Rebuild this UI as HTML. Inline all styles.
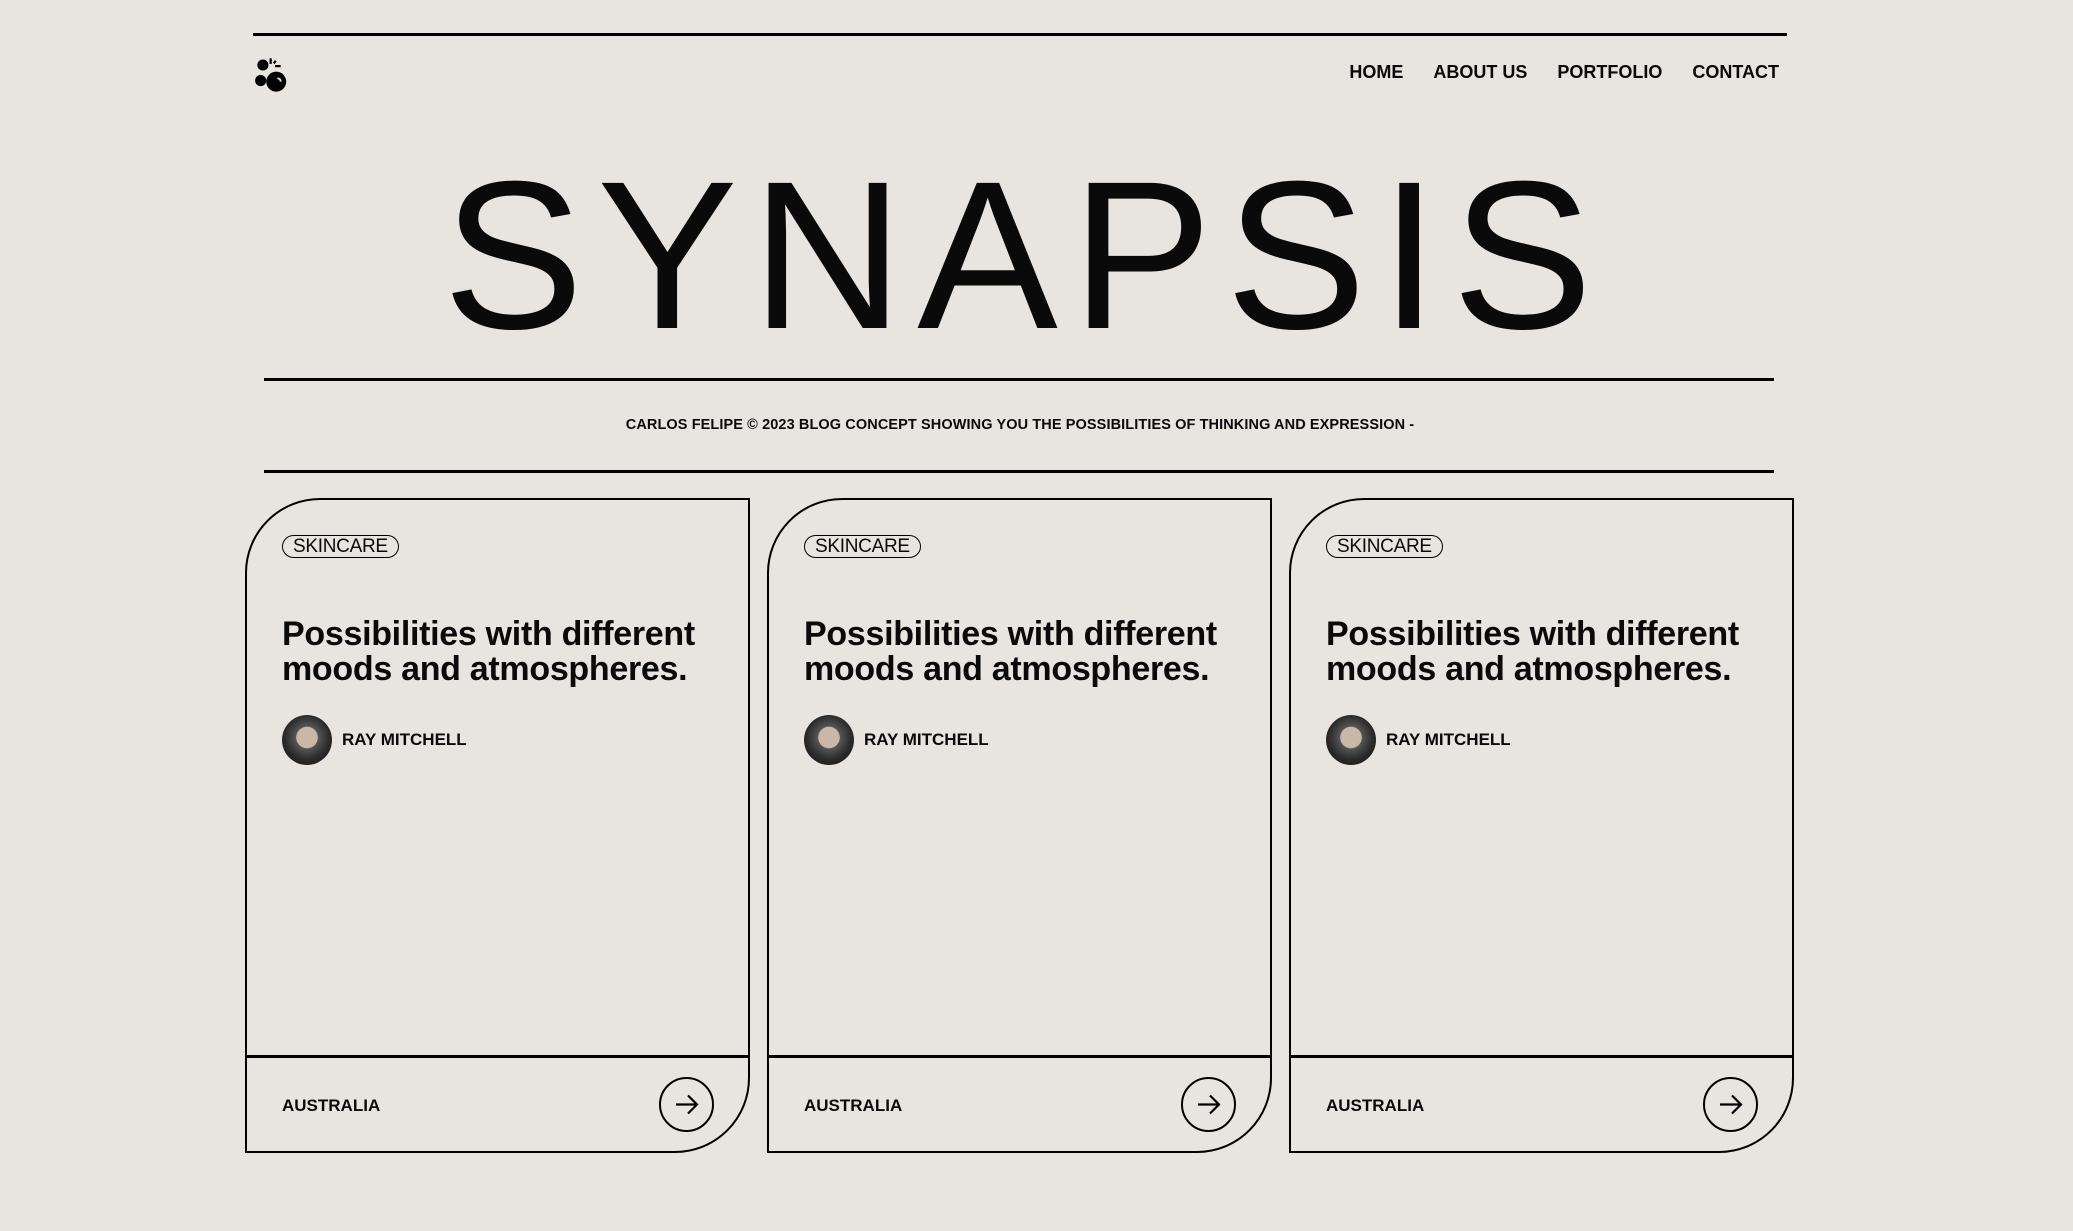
<!DOCTYPE html>
<html><head><meta charset="utf-8"><style>
*{margin:0;padding:0;box-sizing:border-box}
body{width:2073px;height:1231px;background:#e8e4df;font-family:"Liberation Sans",sans-serif;color:#0a0a0a;position:relative;overflow:hidden}
.abs{position:absolute}
.line{position:absolute;background:#000}
nav{position:absolute;right:294px;top:62px;display:flex;gap:30px;font-weight:bold;font-size:18px}
h1{position:absolute;left:-12px;width:2073px;text-align:center;top:150px;font-size:211px;font-weight:normal;letter-spacing:13.5px;line-height:1;}
.sub{position:absolute;top:417px;left:0;width:2040px;text-align:center;font-size:14.5px;font-weight:bold;letter-spacing:0.1px}
.card{position:absolute;top:498px;width:505px;height:655px;border:2.5px solid #000;border-radius:75px 0 75px 0}
.pill{position:absolute;left:35px;top:35px;border:1.5px solid #000;border-radius:12px;font-size:19px;padding:0 10px;height:23px;line-height:21px;letter-spacing:-0.3px}
.title{position:absolute;left:35px;top:117px;font-size:34px;font-weight:bold;line-height:35px;letter-spacing:-0.3px;white-space:nowrap}
.av{position:absolute;left:35px;top:215px;width:50px;height:50px;border-radius:50%;background:radial-gradient(circle at 50% 45%,#c9b8a8 0 28%,#555 30%,#2a2a2a 60%,#111 100%)}
.name{position:absolute;left:95px;top:230px;font-size:17px;font-weight:bold}
.div{position:absolute;left:0;right:0;top:555px;height:2.5px;background:#000}
.loc{position:absolute;left:35px;top:596px;font-size:17px;font-weight:bold}
.arr{position:absolute;left:412px;top:577px;width:55px;height:55px;border:2px solid #000;border-radius:50%}
</style></head><body>
<div class="line" style="left:253px;top:33px;width:1534px;height:3px"></div>
<svg class="abs" style="left:254px;top:56px" width="40" height="38" viewBox="0 0 36 34">
<circle cx="8" cy="8" r="5" fill="#000"/><circle cx="6" cy="22" r="5" fill="#000"/><circle cx="20" cy="23" r="9" fill="#000"/>
<path d="M21 20 q3 0 3 3" stroke="#e8e4df" stroke-width="1.6" fill="none"/>
<rect x="14" y="2" width="2" height="5" fill="#000"/><rect x="19" y="8" width="5" height="2" fill="#000"/><rect x="18" y="4" width="2" height="3" fill="#000" transform="rotate(40 19 5)"/>
</svg>
<nav><span>HOME</span><span>ABOUT US</span><span>PORTFOLIO</span><span>CONTACT</span></nav>
<h1>SYNAPSIS</h1>
<div class="line" style="left:264px;top:378px;width:1510px;height:2.5px"></div>
<div class="sub">CARLOS FELIPE © 2023 BLOG CONCEPT SHOWING YOU THE POSSIBILITIES OF THINKING AND EXPRESSION -</div>
<div class="line" style="left:264px;top:470px;width:1510px;height:2.5px"></div>

<div class="card" style="left:245px">
<div class="pill">SKINCARE</div>
<div class="title">Possibilities with different<br>moods and atmospheres.</div>
<div class="av"></div><div class="name">RAY MITCHELL</div>
<div class="div"></div><div class="loc">AUSTRALIA</div>
<div class="arr"><svg width="51" height="51" viewBox="0 0 51 51"><path d="M15 25.5h21M27 16.5l9 9-9 9" stroke="#000" stroke-width="2.2" fill="none"/></svg></div>
</div>
<div class="card" style="left:767px">
<div class="pill">SKINCARE</div>
<div class="title">Possibilities with different<br>moods and atmospheres.</div>
<div class="av"></div><div class="name">RAY MITCHELL</div>
<div class="div"></div><div class="loc">AUSTRALIA</div>
<div class="arr"><svg width="51" height="51" viewBox="0 0 51 51"><path d="M15 25.5h21M27 16.5l9 9-9 9" stroke="#000" stroke-width="2.2" fill="none"/></svg></div>
</div>
<div class="card" style="left:1289px">
<div class="pill">SKINCARE</div>
<div class="title">Possibilities with different<br>moods and atmospheres.</div>
<div class="av"></div><div class="name">RAY MITCHELL</div>
<div class="div"></div><div class="loc">AUSTRALIA</div>
<div class="arr"><svg width="51" height="51" viewBox="0 0 51 51"><path d="M15 25.5h21M27 16.5l9 9-9 9" stroke="#000" stroke-width="2.2" fill="none"/></svg></div>
</div>
</body></html>
